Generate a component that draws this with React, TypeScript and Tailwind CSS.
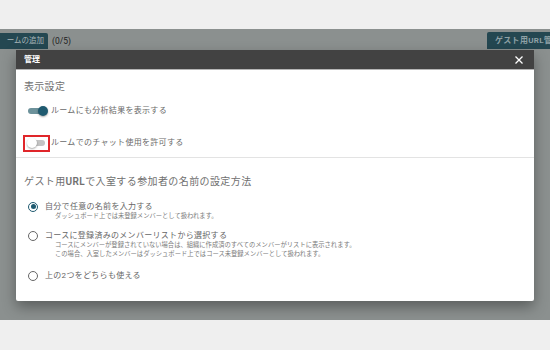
import React from 'react';

const font = { fontFamily: 'Roboto, "Noto Sans CJK JP", sans-serif' };

const Toggle = ({ on, marked }: { on: boolean; marked?: boolean }) => (
    <div className={`relative w-[25px] h-[15px] shrink-0 ${marked ? 'outline-2 outline-[#e0262a] -outline-offset-1' : ''}`}>
        <div className={`absolute left-[4px] top-[4.5px] w-[17px] h-[6px] rounded-full ${on ? 'bg-[#6d929b]' : 'bg-[#c4c4c4]'}`} />
        <div
            className={`absolute top-[2.5px] w-[10px] h-[10px] rounded-full shadow-[0_1px_2px_rgba(0,0,0,0.35)] ${on ? 'left-[14px] bg-[#1f5a70]' : 'left-[3px] bg-white'}`}
        />
    </div>
);

const Radio = ({ checked }: { checked?: boolean }) => (
    <div
        className={`w-[10px] h-[10px] rounded-full border-[1.5px] flex items-center justify-center shrink-0 ${checked ? 'border-[#1f5a70]' : 'border-[#666]'}`}
    >
        {checked && <div className="w-[5px] h-[5px] rounded-full bg-[#1f5a70]" />}
    </div>
);

export default function App() {
    return (
        <div className="w-[550px] h-[350px] flex flex-col bg-[#efefef]" style={font}>
            <div className="h-[29px] shrink-0" />

            {/* dimmed page */}
            <div className="relative h-[291px] shrink-0 bg-[#8b908f] overflow-hidden">
                <div className="flex items-center pt-[4px]">
                    <div className="h-[16px] w-[48px] bg-[#244751] rounded-tr-[2px] flex items-center justify-end pr-[4px] text-[7.5px] text-[#a9b6b9] whitespace-nowrap overflow-hidden">
                        ームの追加
                    </div>
                    <span className="ml-[4px] text-[8.5px] text-[#222]">(0/5)</span>
                    <div className="ml-auto mt-[-1px] h-[17px] w-[63px] bg-[#244751] rounded-tl-[2px] flex items-center pl-[8px] text-[8px] font-bold tracking-[0.3px] text-[#8fa1a6] whitespace-nowrap overflow-hidden">
                        ゲスト用URL管理
                    </div>
                </div>

                {/* modal */}
                <div className="absolute left-[16px] top-[21px] w-[518px] rounded-b-[2px] bg-white shadow-[0_6px_14px_rgba(0,0,0,0.35)]">
                    <div className="h-[20px] bg-[#424242] border-b border-[#b5b5b5] flex items-center justify-between px-[8px]">
                        <span className="text-[8px] font-bold text-white">管理</span>
                        <svg width="10" height="10" viewBox="0 0 10 10" className="mr-[2px]">
                            <path d="M1.5 1.5L8.5 8.5M8.5 1.5L1.5 8.5" stroke="white" strokeWidth="1.3" />
                        </svg>
                    </div>

                    <div className="px-[8px] pt-[10px] pb-[20px] text-[#616161]">
                        <div className="text-[10px] leading-[14px] text-[#707070] tracking-[0.3px]">表示設定</div>

                        <div className="mt-[7px] h-[20px] flex items-center gap-[2px]">
                            <Toggle on />
                            <span className="text-[8px] tracking-[0.3px] text-[#6a6a6a]">ルームにも分析結果を表示する</span>
                        </div>
                        <div className="mt-[12px] h-[20px] flex items-center gap-[2px]">
                            <Toggle on={false} marked />
                            <span className="text-[8px] tracking-[0.3px] text-[#6a6a6a]">ルームでのチャット使用を許可する</span>
                        </div>

                        <div className="-mx-[8px] mt-[4px] h-px bg-[#e3e3e3]" />

                        <div className="mt-[17px] text-[10px] leading-[14px] text-[#707070] tracking-[0.4px]">
                            ゲスト用<span className="font-semibold">URL</span>で入室する参加者の名前の設定方法
                        </div>

                        <div className="pl-[4px]">
                            <div className="mt-[12px] h-[11px] flex items-center gap-[7px]">
                                <Radio checked />
                                <span className="text-[8px] tracking-[0.3px] text-[#666]">自分で任意の名前を入力する</span>
                            </div>
                            <div className="pl-[27px] text-[6.3px] leading-[9px] text-[#7a7a7a]">
                                ダッシュボード上では未登録メンバーとして扱われます。
                            </div>

                            <div className="mt-[9px] h-[11px] flex items-center gap-[7px]">
                                <Radio />
                                <span className="text-[8px] tracking-[0.3px] text-[#666]">コースに登録済みのメンバーリストから選択する</span>
                            </div>
                            <div className="pl-[27px] text-[6.3px] leading-[9px] text-[#7a7a7a]">
                                <div>コースにメンバーが登録されていない場合は、組織に作成済のすべてのメンバーがリストに表示されます。</div>
                                <div>この場合、入室したメンバーはダッシュボード上ではコース未登録メンバーとして扱われます。</div>
                            </div>

                            <div className="mt-[11px] h-[11px] flex items-center gap-[7px]">
                                <Radio />
                                <span className="text-[8px] tracking-[0.3px] text-[#666]">上の2つをどちらも使える</span>
                            </div>
                        </div>
                    </div>
                </div>
            </div>

            <div className="flex-1" />
        </div>
    );
}
